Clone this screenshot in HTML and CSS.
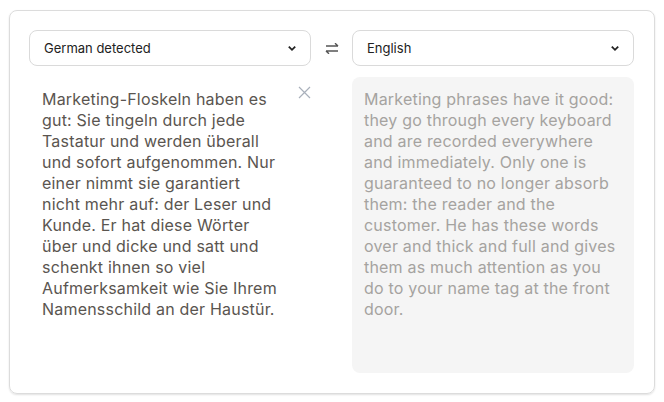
FILE: index.html
```html
<!DOCTYPE html>
<html lang="en">
<head>
<meta charset="utf-8">
<link rel="stylesheet" href="styles.css">
</head>
<body>
<div class="card">
  <div class="toolbar">
    <div class="select">
      <span>German detected</span>
      <svg class="chev" width="10" height="7" viewBox="0 0 10 7"><path d="M1.8 1.6 L5 4.8 L8.2 1.6" fill="none" stroke="#222" stroke-width="1.8"/></svg>
    </div>
    <div class="swap">
      <svg width="14" height="11" viewBox="0 0 14 11"><path d="M1 3 H13 M10 0.2 L13 3 M13 8 H1 M4 10.8 L1 8" fill="none" stroke="#555" stroke-width="1.4"/></svg>
    </div>
    <div class="select">
      <span>English</span>
      <svg class="chev" width="10" height="7" viewBox="0 0 10 7"><path d="M1.8 1.6 L5 4.8 L8.2 1.6" fill="none" stroke="#222" stroke-width="1.8"/></svg>
    </div>
  </div>
  <div class="panes">
    <div class="source">
      <p class="text">Marketing-Floskeln haben es<br>gut: Sie tingeln durch jede<br>Tastatur und werden überall<br>und sofort aufgenommen. Nur<br>einer nimmt sie garantiert<br>nicht mehr auf: der Leser und<br>Kunde. Er hat diese Wörter<br>über und dicke und satt und<br>schenkt ihnen so viel<br>Aufmerksamkeit wie Sie Ihrem<br>Namensschild an der Haustür.</p>
      <svg class="clear" width="13" height="13" viewBox="0 0 13 13"><path d="M1 1 L12 12 M12 1 L1 12" fill="none" stroke="#a9b0bb" stroke-width="1.2"/></svg>
    </div>
    <div class="target">
      <p class="text">Marketing phrases have it good:<br>they go through every keyboard<br>and are recorded everywhere<br>and immediately. Only one is<br>guaranteed to no longer absorb<br>them: the reader and the<br>customer. He has these words<br>over and thick and full and gives<br>them as much attention as you<br>do to your name tag at the front<br>door.</p>
    </div>
  </div>
</div>
</body>
</html>
```
FILE: styles.css
```css
html, body { margin: 0; padding: 0; background: #fff; }
body { padding: 10px 9px 9px 9px; font-family: Inter, "Open Sans", sans-serif; }
.card {
  width: 646px;
  height: 384px;
  box-sizing: border-box;
  border: 1px solid #dcdcdc;
  border-radius: 8px;
  box-shadow: 0 1px 2px rgba(0,0,0,0.12);
  padding: 19px 20px 19px 19px;
}
.toolbar { display: flex; align-items: center; }
.select {
  flex: 0 0 282px;
  height: 36px;
  box-sizing: border-box;
  border: 1px solid #dadada;
  border-radius: 8px;
  display: flex;
  align-items: center;
  justify-content: space-between;
  padding: 0 13px 0 14px;
  font-size: 13px;
  color: #222;
}
.swap { width: 41px; display: flex; justify-content: center; padding-top: 1px; }
.panes { display: flex; margin-top: 11px; gap: 41px; }
.source, .target {
  flex: 0 0 282px;
  height: 296px;
  box-sizing: border-box;
  position: relative;
}
.target { background: #f5f5f5; border-radius: 8px; }
.text {
  margin: 0;
  font-size: 16px;
  letter-spacing: 0.2px;
  line-height: 21px;
  padding: 12px 12px 0 13px;
  white-space: nowrap;
}
.source .text { color: #5a5550; }
.target .text { color: #a5a3a0; padding-left: 12px; }
.clear { position: absolute; top: 9px; right: 0; }
```
